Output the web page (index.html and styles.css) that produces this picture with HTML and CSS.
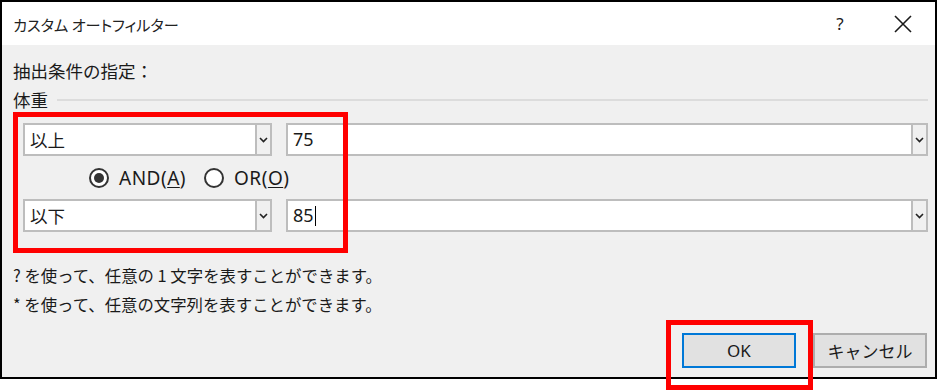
FILE: index.html
```html
<!DOCTYPE html>
<html lang="ja">
<head>
<meta charset="utf-8">
<title>カスタム オートフィルター</title>
<link rel="stylesheet" href="styles.css">
</head>
<body>
<div class="dialog">
  <div class="titlebar">
    <span class="title">カスタム オートフィルター</span>
    <span class="help">?</span>
    <span class="close">
      <svg width="18" height="18" viewBox="0 0 18 18"><path d="M1 1 L17 17 M17 1 L1 17" stroke="#1a1a1a" stroke-width="1.6" fill="none"/></svg>
    </span>
  </div>
  <div class="content">
    <div class="label">抽出条件の指定：</div>
    <div class="group">
      <span class="group-name">体重</span>
      <span class="group-line"></span>
    </div>
    <div class="row">
      <div class="combo op">
        <span class="combo-text">以上</span>
        <span class="drop"><svg width="9" height="6" viewBox="0 0 9 6"><path d="M1 1 L4.5 4.5 L8 1" stroke="#222" stroke-width="1.6" fill="none"/></svg></span>
      </div>
      <div class="combo val">
        <span class="combo-text num">75</span>
        <span class="drop"><svg width="9" height="6" viewBox="0 0 9 6"><path d="M1 1 L4.5 4.5 L8 1" stroke="#222" stroke-width="1.6" fill="none"/></svg></span>
      </div>
    </div>
    <div class="radios">
      <label class="radio"><span class="circle checked"></span><span class="rtext">AND(<u>A</u>)</span></label>
      <label class="radio"><span class="circle"></span><span class="rtext">OR(<u>O</u>)</span></label>
    </div>
    <div class="row">
      <div class="combo op">
        <span class="combo-text">以下</span>
        <span class="drop"><svg width="9" height="6" viewBox="0 0 9 6"><path d="M1 1 L4.5 4.5 L8 1" stroke="#222" stroke-width="1.6" fill="none"/></svg></span>
      </div>
      <div class="combo val">
        <span class="combo-text num">85<span class="caret"></span></span>
        <span class="drop"><svg width="9" height="6" viewBox="0 0 9 6"><path d="M1 1 L4.5 4.5 L8 1" stroke="#222" stroke-width="1.6" fill="none"/></svg></span>
      </div>
    </div>
    <div class="hints">
      <div class="hint">? を使って、任意の 1 文字を表すことができます。</div>
      <div class="hint">* を使って、任意の文字列を表すことができます。</div>
    </div>
    <div class="buttons">
      <button class="btn default">OK</button>
      <button class="btn">キャンセル</button>
    </div>
  </div>
  <div class="mark mark-conditions"></div>
  <div class="mark mark-ok"></div>
</div>
</body>
</html>
```

FILE: styles.css
```css
html, body {
  margin: 0;
  padding: 0;
  background: #ffffff;
}
body {
  min-height: 391px;
  font-family: "Noto Sans CJK JP", "Noto Sans", sans-serif;
  color: #1a1a1a;
}
.dialog {
  position: relative;
  width: 937px;
  height: 379px;
  box-sizing: border-box;
  border: 2px solid #000;
  background: #f0f0f0;
}
.titlebar {
  height: 43px;
  background: #ffffff;
  display: flex;
  align-items: center;
  padding-left: 11px;
}
.title {
  font-size: 15.2px;
  font-feature-settings: "palt";
  flex: 1;
  color: #222;
}
.help {
  font-family: "Noto Sans", sans-serif;
  font-size: 17px;
  width: 20px;
  margin-right: 44px;
  text-align: center;
}
.close {
  display: flex;
  width: 18px;
  margin-right: 23px;
}
.content {
  padding: 0 7px 0 11px;
}
.label {
  margin-top: 14px;
  font-size: 17.5px;
  line-height: 24px;
  height: 24px;
}
.group {
  display: flex;
  align-items: center;
  height: 24px;
  margin-top: 5px;
}
.group-name {
  font-size: 17.5px;
  line-height: 24px;
}
.group-line {
  flex: 1;
  height: 2px;
  background: #dcdcdc;
  margin-left: 9px;
}
.row {
  display: flex;
  margin-left: 10px;
  gap: 14px;
  height: 33px;
}
.group + .row {
  margin-top: 11px;
}
.combo {
  display: flex;
  box-sizing: border-box;
  height: 100%;
  border: 2px solid #bdbdbd;
  background: #ffffff;
}
.combo.op {
  width: 249px;
}
.combo.val {
  flex: 1;
}
.combo-text {
  flex: 1;
  font-size: 17.5px;
  line-height: 29px;
  padding-left: 5px;
  display: flex;
  align-items: center;
}
.combo-text.num {
  font-family: "Noto Sans", sans-serif;
  font-size: 18px;
}
.caret {
  display: inline-block;
  width: 1px;
  height: 20px;
  background: #000;
  margin-left: 1px;
}
.drop {
  width: 13px;
  border-left: 2px solid #bdbdbd;
  background: #f0f0f0;
  display: flex;
  align-items: center;
  justify-content: center;
}
.radios {
  display: flex;
  align-items: center;
  height: 43px;
  margin-left: 76px;
  gap: 18px;
}
.radio {
  display: flex;
  align-items: center;
}
.circle {
  box-sizing: border-box;
  width: 20px;
  height: 20px;
  border: 2px solid #333;
  border-radius: 50%;
  background: #fff;
  display: flex;
  align-items: center;
  justify-content: center;
}
.circle.checked::after {
  content: "";
  width: 10px;
  height: 10px;
  border-radius: 50%;
  background: #333;
}
.rtext {
  font-family: "Noto Sans", sans-serif;
  font-size: 19px;
  letter-spacing: 0.5px;
  margin-left: 10px;
}
.rtext u {
  text-underline-offset: 2px;
}
.hints {
  margin-top: 29px;
}
.hint {
  font-size: 16.4px;
  line-height: 29px;
  height: 29px;
}
.buttons {
  display: flex;
  justify-content: flex-end;
  gap: 17px;
  margin-top: 14px;
  padding-right: 1px;
}
.btn {
  width: 114px;
  height: 35px;
  box-sizing: border-box;
  border: 2px solid #adadad;
  background: #e1e1e1;
  font-family: "Noto Sans CJK JP", "Noto Sans", sans-serif;
  font-size: 17px;
  color: #1a1a1a;
  padding: 0;
}
.btn.default {
  border-color: #0078d7;
  font-family: "Noto Sans", sans-serif;
}
.mark {
  position: absolute;
  box-sizing: border-box;
  border: 5px solid #ff0000;
}
.mark-conditions {
  left: 11px;
  top: 110px;
  width: 335px;
  height: 141px;
}
.mark-ok {
  left: 664px;
  top: 318px;
  width: 147px;
  height: 70px;
}
```
